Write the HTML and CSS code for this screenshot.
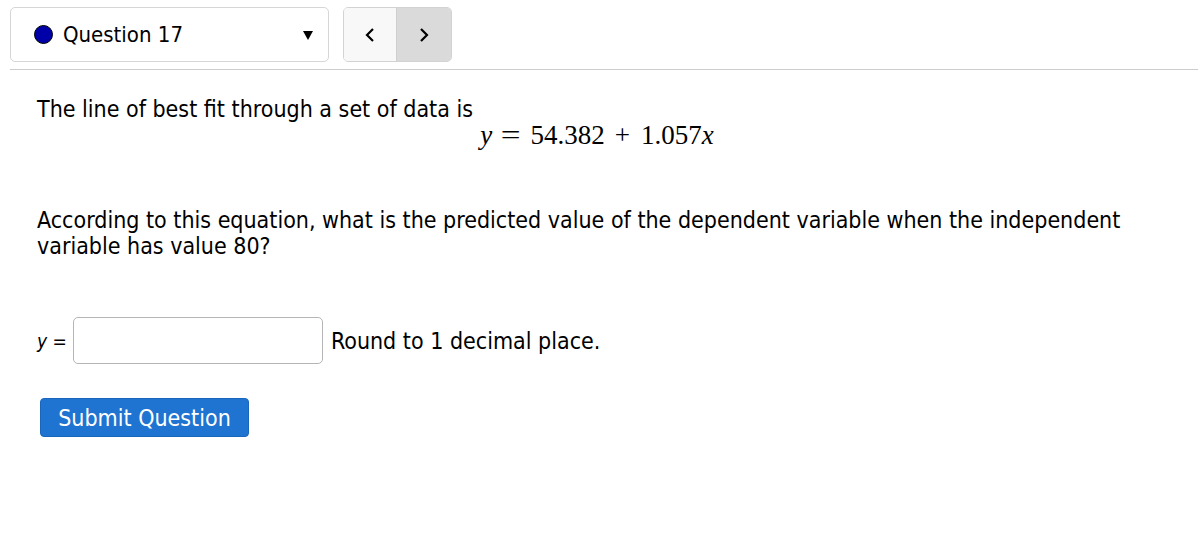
FILE: index.html
```html
<!DOCTYPE html>
<html>
<head>
<meta charset="utf-8">
<link rel="stylesheet" href="styles.css">
</head>
<body>
<div class="page">
  <div class="topbar">
    <div class="qselect">
      <span class="dot"></span>
      <span class="qlabel">Question 17</span>
      <span class="caret"></span>
    </div>
    <div class="nav">
      <button class="navbtn prev" aria-label="Previous question"><svg width="12" height="16" viewBox="0 0 12 16"><polyline points="9,2 3,8 9,14" fill="none" stroke="#000" stroke-width="2.2"/></svg></button>
      <button class="navbtn next" aria-label="Next question"><svg width="12" height="16" viewBox="0 0 12 16"><polyline points="3,2 9,8 3,14" fill="none" stroke="#000" stroke-width="2.2"/></svg></button>
    </div>
  </div>
  <div class="rule"></div>
  <div class="question">
    <p class="line1">The line of best fit through a set of data is</p>
    <div class="math"><i>y</i><span class="op eq">=</span>54.382<span class="op">+</span>1.057<i>x</i></div>
    <p class="ask">According to this equation, what is the predicted value of the dependent variable when the independent variable has value 80?</p>
    <div class="answer">
      <span class="yeq"><i>y</i> =</span>
      <input class="ans" type="text">
      <span class="hint">Round to 1 decimal place.</span>
    </div>
    <button class="submit">Submit Question</button>
  </div>
</div>
</body>
</html>
```
FILE: styles.css
```css
html, body { margin: 0; padding: 0; background: #fff; }
body { font-family: "DejaVu Sans Condensed", "DejaVu Sans", sans-serif; color: #000; }
.page { padding: 7px 0 0 10px; }
.topbar { display: flex; gap: 14px; align-items: stretch; }
.qselect {
  box-sizing: border-box; width: 319px; height: 55px;
  border: 1px solid #d6d6d6; border-radius: 5px;
  display: flex; align-items: center; padding: 0 15px 0 23px;
}
.dot { width: 19px; height: 19px; border-radius: 50%; background: #0000a8; border: 1.5px solid #000; box-sizing: border-box; margin-right: 10px; }
.qlabel { font-size: 22px; flex: 1; }
.caret { width: 0; height: 0; border-left: 5.5px solid transparent; border-right: 5.5px solid transparent; border-top: 9px solid #000; margin-top: 2px; }
.nav { display: flex; border: 1px solid #d3d3d3; border-radius: 5px; overflow: hidden; height: 55px; box-sizing: border-box; }
.navbtn { width: 53px; border: 0; padding: 0; display: flex; align-items: center; justify-content: center; }
.prev { background: #f8f8f8; border-right: 1px solid #cfcfcf; }
.next { background: #dadada; width: 54px; }
.rule { height: 1px; background: #cccccc; margin-top: 7px; }
.question { padding: 0 41px 0 27px; font-size: 23px; }
.line1 { margin: 26px 0 0 0; line-height: 26px; }
.math { text-align: center; font-family: "Liberation Serif", "DejaVu Serif", serif; font-size: 27px; line-height: 28px; margin-top: -1px; }
.math i { font-style: italic; }
.math .op { display: inline-block; margin: 0 11px 0 10px; }
.math .eq { transform: scaleX(1.3); margin: 0 12px 0 11px; }
.ask { margin: 58px 0 0 0; line-height: 26px; }
.answer { display: flex; align-items: center; margin-top: 58px; }
.yeq { font-size: 19px; margin-right: 6px; }
.ans { box-sizing: border-box; width: 250px; height: 47px; border: 1px solid #b5b5b5; border-radius: 5px; margin: 0 8px 0 0; }
.hint { font-size: 23px; }
.submit {
  display: block; margin-top: 34px; margin-left: 3px; background: #1f74d1; color: #fff; border: 1px solid #1a66bb; border-radius: 4px;
  font-family: "DejaVu Sans Condensed", "DejaVu Sans", sans-serif; font-size: 23px; width: 209px; height: 39px; padding: 0;
}
```
